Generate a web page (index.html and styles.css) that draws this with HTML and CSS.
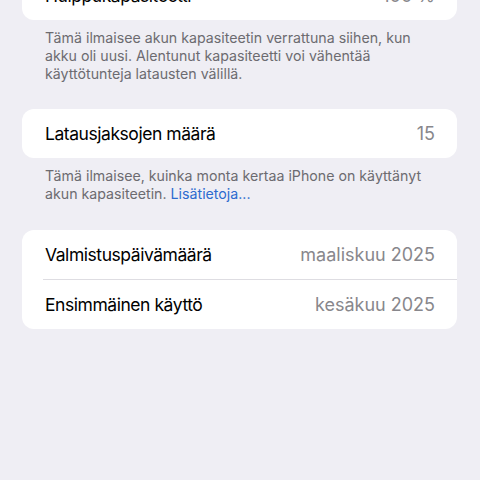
FILE: index.html
```html
<!DOCTYPE html>
<html lang="fi">
<head>
    <meta charset="UTF-8">
    <meta name="viewport" content="width=device-width, initial-scale=1.0">
    <title>Akun kunto</title>
    <link rel="stylesheet" href="styles.css">
</head>
<body>
    <div class="page">
        <div class="group first">
            <div class="row">
                <span class="label">Huippukapasiteetti</span>
                <span class="value">100 %</span>
            </div>
        </div>
        <p class="note">Tämä ilmaisee akun kapasiteetin verrattuna siihen, kun akku oli uusi. Alentunut kapasiteetti voi vähentää käyttötunteja latausten välillä.</p>

        <div class="group">
            <div class="row">
                <span class="label">Latausjaksojen määrä</span>
                <span class="value">15</span>
            </div>
        </div>
        <p class="note wide">Tämä ilmaisee, kuinka monta kertaa iPhone on käyttänyt akun kapasiteetin. <a class="more" href="#">Lisätietoja...</a></p>

        <div class="group">
            <div class="row">
                <span class="label">Valmistuspäivämäärä</span>
                <span class="value">maaliskuu 2025</span>
            </div>
            <div class="row">
                <span class="label">Ensimmäinen käyttö</span>
                <span class="value">kesäkuu 2025</span>
            </div>
        </div>
    </div>
</body>
</html>
```

FILE: styles.css
```css
html, body {
    margin: 0;
    padding: 0;
    height: 100%;
    background: #efeef4;
    font-family: Inter, "Liberation Sans", sans-serif;
    overflow: hidden;
}
.page {
    padding: 0 23px 0 22px;
}
.group {
    background: #fff;
    border-radius: 12px;
}
.group.first {
    margin-top: -29px;
}
.row {
    display: flex;
    justify-content: space-between;
    align-items: center;
    height: 49px;
    padding: 0 22px 0 23px;
    font-size: 17.5px;
    color: #000;
}
.row + .row {
    border-top: 1px solid #dedde2;
    margin-left: 21px;
    padding-left: 2px;
}
.label {
    letter-spacing: -0.45px;
}
.value {
    color: #88878c;
    font-size: 18px;
}
.note {
    margin: 9px 0 26px;
    padding: 0 22px 0 23px;
    font-size: 14.2px;
    line-height: 18px;
    color: #6c6b70;
}
.note.wide {
    margin-bottom: 27px;
}
.more {
    color: #2d6bcf;
    text-decoration: none;
}
```
